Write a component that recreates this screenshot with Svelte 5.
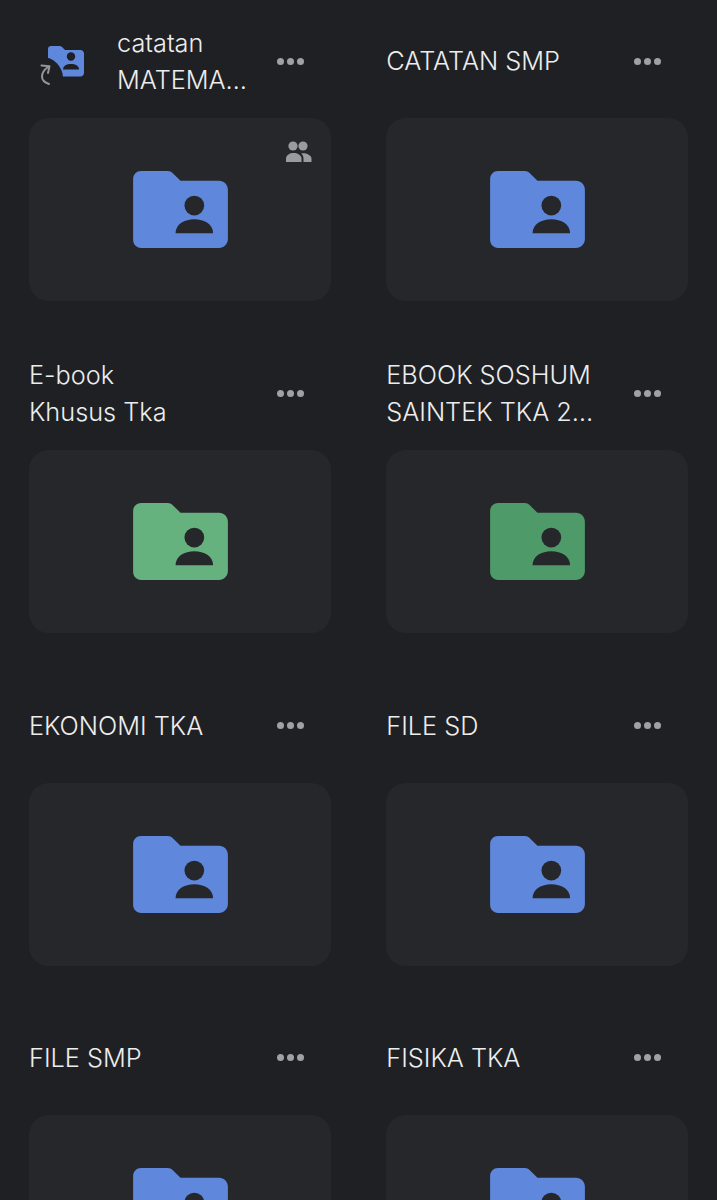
<script lang="ts">
	const blue = '#5f88dd';

	const folders = [
		{ lines: ['catatan', 'MATEMA…'], color: blue, shortcut: true, shared: true },
		{ lines: ['CATATAN SMP'], color: blue },
		{ lines: ['E-book', 'Khusus Tka'], color: '#66b27e' },
		{ lines: ['EBOOK SOSHUM', 'SAINTEK TKA 2…'], color: '#4e9a68' },
		{ lines: ['EKONOMI TKA'], color: blue },
		{ lines: ['FILE SD'], color: blue },
		{ lines: ['FILE SMP'], color: blue },
		{ lines: ['FISIKA TKA'], color: blue }
	];
</script>

<div class="page">
	<div class="grid">
		{#each folders as folder}
			<div class="item">
				<div class="item-head">
					{#if folder.shortcut}
						<!-- small folder with the shortcut arrow over its corner -->
						<svg class="shortcut-icon" viewBox="0 0 57 42" width="57" height="42" aria-hidden="true">
							<path
								d="M21 2h8.500c1 0 1.900.4 2.600 1.100L35 6h15.500c1.900 0 3.500 1.600 3.500 3.500V29c0 1.900-1.600 3.500-3.500 3.500h-29c-1.900 0-3.500-1.600-3.500-3.500V5c0-1.700 1.300-3 3-3z"
								fill={folder.color}
							/>
							<circle cx="12" cy="34" r="21" fill="#1f2024" />
							<circle cx="41" cy="12.500" r="4.200" fill="#1f2024" />
							<path d="M33 25.500c0-3.700 3.600-5.500 8-5.500s8 1.800 8 5.500z" fill="#1f2024" />
							<path
								d="M19 40c-4.500-1.500-7-4.500-7-7.500 0-3.500 2.500-7 6-9.500M11.500 21.500l8 .8-1.500 6.700"
								fill="none"
								stroke="#949597"
								stroke-width="2"
								stroke-linecap="round"
								stroke-linejoin="round"
							/>
						</svg>
					{/if}
					<div class="name">
						{#each folder.lines as line}
							<span>{line}</span>
						{/each}
					</div>
					<button class="more" aria-label="More">
						<i></i><i></i><i></i>
					</button>
				</div>

				<div class="card">
					{#if folder.shared}
						<svg class="shared-icon" viewBox="0 0 27 23" width="27" height="23" aria-hidden="true">
							<circle cx="8" cy="6" r="4.600" />
							<circle cx="18" cy="6" r="4.600" />
							<path d="M1 22v-3.500C1 15 5 13 8.500 13s8 2 8 5.500V22z" />
							<path d="M18.500 22v-3.500c0-2-.8-3.700-2.300-5 .6-.1 1.300-.2 1.900-.2 3.500 0 8.400 2 8.400 5.200V22z" />
						</svg>
					{/if}
					<svg class="folder-icon" viewBox="0 0 96 78" width="95" height="77" aria-hidden="true">
						<path
							d="M8 0h27c2 0 3.800.8 5.200 2.200L48 10h39c5 0 9 4 9 9v50c0 5-4 9-9 9H8c-4.400 0-8-3.600-8-8V8c0-4.400 3.600-8 8-8z"
							fill={folder.color}
						/>
						<circle cx="62" cy="35" r="10" fill="#26272b" />
						<path d="M43 63c0-9 9-14 19-14s19 5 19 14z" fill="#26272b" />
					</svg>
				</div>
			</div>
		{/each}
	</div>
</div>

<style>
	:global(body) {
		background: #1f2024;
	}

	.page {
		height: 100vh;
		overflow: hidden;
		padding: 18px 29px 0;
		box-sizing: border-box;
		font-family: Inter, 'Liberation Sans', sans-serif;
	}

	.grid {
		display: grid;
		grid-template-columns: repeat(2, minmax(0, 1fr));
		column-gap: 55.500px;
		row-gap: 49.300px;
	}

	.item-head {
		display: flex;
		align-items: center;
		height: 86px;
		margin-bottom: 14px;
		padding-right: 27.200px;
	}

	.shortcut-icon {
		flex-shrink: 0;
		margin: 8px 30px 0 1px;
	}

	.name {
		flex: 1;
		min-width: 0;
		margin-top: 1.500px;
		font-size: 25.300px;
		line-height: 36.600px;
		font-weight: 300;
		color: #eceded;
		white-space: nowrap;
	}

	.name span {
		display: block;
	}

	.more {
		display: flex;
		flex-shrink: 0;
		gap: 2.700px;
		padding: 0;
		border: none;
		background: none;
	}

	.more i {
		display: block;
		width: 7px;
		height: 7px;
		border-radius: 50%;
		background: #a0a1a3;
	}

	.card {
		position: relative;
		height: 183px;
		border-radius: 20px;
		background: #26272b;
		display: flex;
		align-items: center;
		justify-content: center;
	}

	.folder-icon {
		display: block;
		margin-left: 1px;
	}

	.shared-icon {
		position: absolute;
		top: 22px;
		right: 19px;
		fill: #9a9b9d;
	}
</style>
